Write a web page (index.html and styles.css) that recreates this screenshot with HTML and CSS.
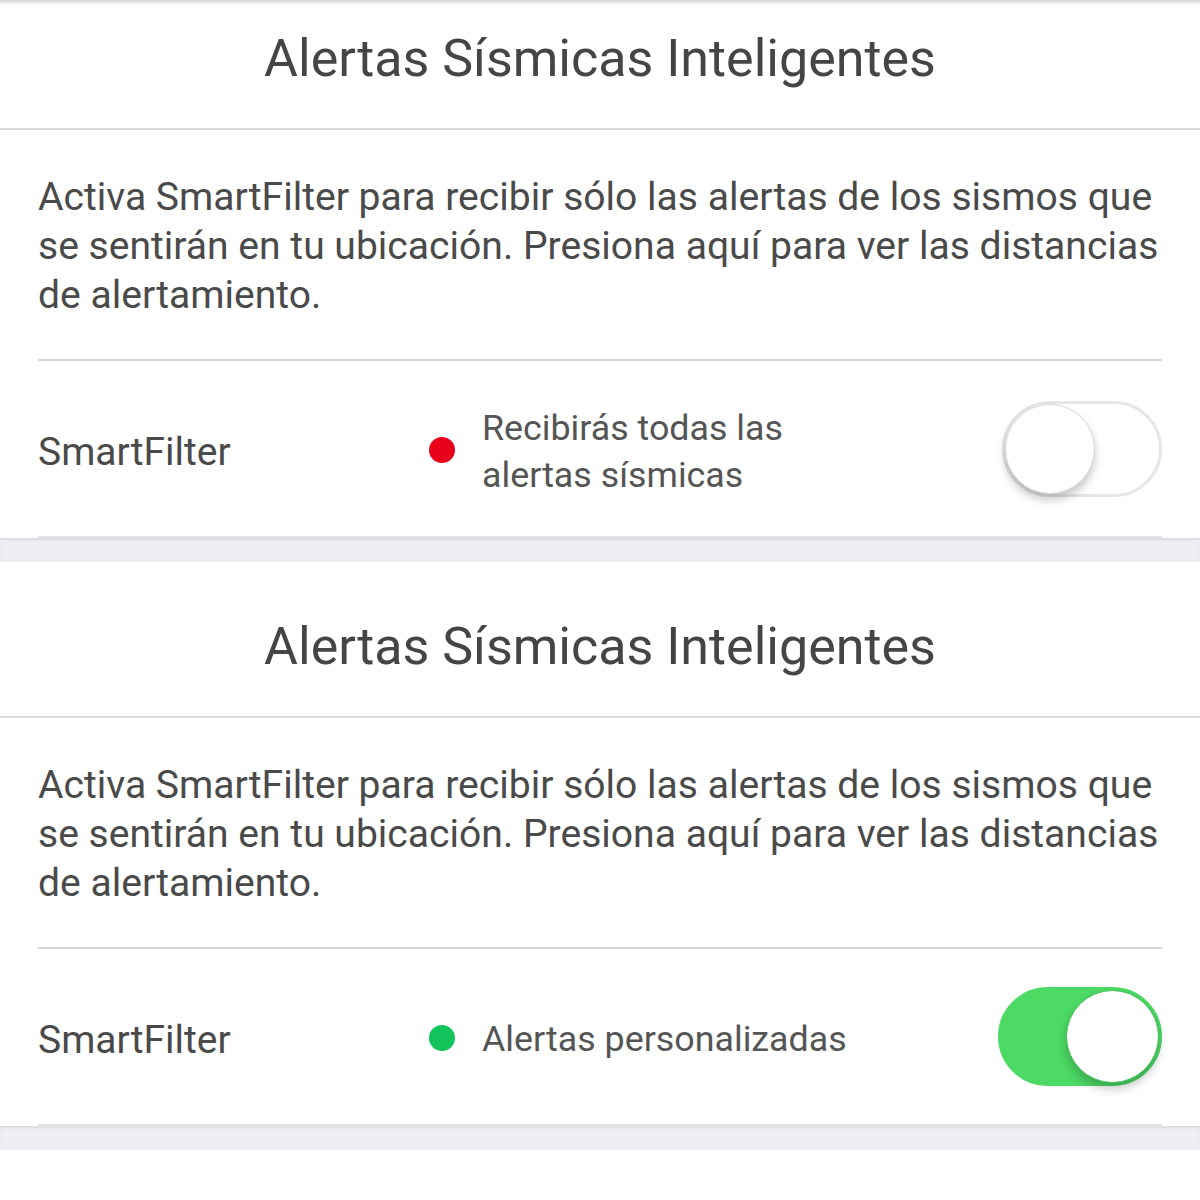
FILE: index.html
```html
<!DOCTYPE html>
<html lang="es">
<head>
    <meta charset="UTF-8">
    <meta name="viewport" content="width=device-width, initial-scale=1.0">
    <title>SmartFilter</title>
    <link rel="stylesheet" href="styles.css">
</head>
<body>
    <div class="top-shade"></div>

    <div class="page">
        <section class="card">
            <h2 class="card-title">Alertas Sísmicas Inteligentes</h2>
            <p class="card-text">Activa SmartFilter para recibir sólo las alertas de los sismos que se sentirán en tu ubicación. Presiona aquí para ver las distancias de alertamiento.</p>
            <div class="setting-row">
                <span class="setting-label">SmartFilter</span>
                <span class="dot dot-red"></span>
                <span class="setting-status">Recibirás todas las alertas sísmicas</span>
                <span class="toggle"><span class="knob"></span></span>
            </div>
        </section>
        <div class="gap"></div>

        <section class="card">
            <h2 class="card-title">Alertas Sísmicas Inteligentes</h2>
            <p class="card-text">Activa SmartFilter para recibir sólo las alertas de los sismos que se sentirán en tu ubicación. Presiona aquí para ver las distancias de alertamiento.</p>
            <div class="setting-row">
                <span class="setting-label">SmartFilter</span>
                <span class="dot dot-green"></span>
                <span class="setting-status">Alertas personalizadas</span>
                <span class="toggle on"><span class="knob"></span></span>
            </div>
        </section>
        <div class="gap"></div>
    </div>
</body>
</html>
```

FILE: styles.css
```css
* {
    box-sizing: border-box;
}

body {
    margin: 0;
    background-color: #fff;
    font-family: Roboto, "Noto Sans", sans-serif;
    color: #4a4a4a;
    position: relative;
    overflow: hidden;
}

/* faint shadow left by the bar above */
.top-shade {
    position: absolute;
    top: 0;
    left: 0;
    right: 0;
    height: 5px;
    z-index: 1;
    background: linear-gradient(#d4d4d6, rgba(255, 255, 255, 0));
}

/* list is scrolled a little, first card's top is hidden */
.page {
    margin-top: -26px;
}

.card {
    background-color: #fff;
}

.card-title {
    margin: 0;
    height: 156px;
    padding-top: 16px;
    line-height: 138px;
    text-align: center;
    font-size: 52px;
    font-weight: 400;
    color: #454545;
    border-bottom: 2px solid #d9d9d9;
}

.card-text {
    margin: 0 38px;
    padding: 43px 0 39px;
    font-size: 39.1px;
    line-height: 49px;
    border-bottom: 2px solid #d6d6d6;
}

.setting-row {
    display: flex;
    align-items: center;
    height: 177px;
    margin: 0 38px;
    border-bottom: 2px solid #e2e2e4;
}

.setting-label {
    width: 391px;
    padding-top: 6px;
    font-size: 39px;
}

.dot {
    width: 26px;
    height: 26px;
    border-radius: 50%;
    margin-right: 27px;
    margin-top: 2px;
}

.dot-red {
    background-color: #e8001b;
}

.dot-green {
    background-color: #12c25b;
}

.setting-status {
    flex: 1;
    max-width: 400px;
    padding-top: 6px;
    font-size: 35.8px;
    line-height: 47px;
    color: #555;
}

.toggle {
    margin-left: auto;
    position: relative;
    width: 160px;
    height: 96px;
    border-radius: 48px;
    border: 3px solid #e6e6e6;
    background-color: #fff;
}

.knob {
    position: absolute;
    top: 0;
    left: 0;
    width: 90px;
    height: 90px;
    border-radius: 50%;
    background-color: #fff;
    border: 1px solid #d8d8d8;
    box-shadow: 0 6px 10px rgba(0, 0, 0, 0.22);
}

.toggle.on {
    width: 164px;
    height: 99px;
    border-radius: 50px;
    background-color: #4cd964;
    border-color: #4cd964;
}

.toggle.on .knob {
    left: auto;
    right: 0;
    width: 93px;
    height: 93px;
    border-color: #3fbf55;
}

.gap {
    height: 24px;
    background-color: #efeef4;
    box-shadow: inset 0 2px 2px #dcdce0;
}
```
